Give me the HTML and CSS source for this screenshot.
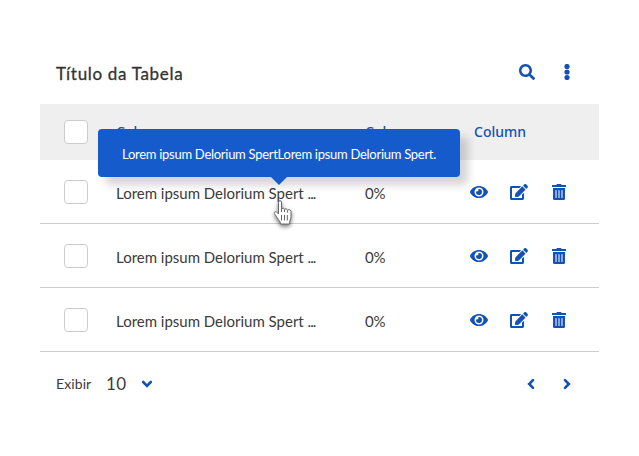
FILE: index.html
```
<!DOCTYPE html>
<html lang="pt-BR">
<head>
<meta charset="utf-8">
<title>Tabela</title>
<link rel="stylesheet" href="styles.css">
</head>
<body>
<svg class="defs" aria-hidden="true">
  <symbol id="eye" viewBox="0 0 576 512"><path d="M572.52 241.4C518.29 135.59 410.93 64 288 64S57.68 135.64 3.48 241.41a32.35 32.35 0 0 0 0 29.19C57.71 376.41 165.07 448 288 448s230.32-71.64 284.52-177.41a32.35 32.35 0 0 0 0-29.19zM288 400a144 144 0 1 1 144-144 143.93 143.93 0 0 1-144 144zm0-240a95.31 95.31 0 0 0-25.31 3.79 47.85 47.85 0 0 1-66.9 66.9A95.78 95.78 0 1 0 288 160z"/></symbol>
  <symbol id="edit" viewBox="0 0 576 512"><path d="M402.6 83.2l90.2 90.2c3.8 3.8 3.8 10 0 13.8L274.4 405.6l-92.8 10.3c-12.4 1.4-22.9-9.1-21.5-21.5l10.3-92.8L388.8 83.2c3.8-3.8 10-3.8 13.8 0zm162-22.9l-48.8-48.8c-15.2-15.2-39.9-15.2-55.2 0l-35.4 35.4c-3.8 3.8-3.8 10 0 13.8l90.2 90.2c3.8 3.8 10 3.8 13.8 0l35.4-35.4c15.2-15.3 15.2-40 0-55.2zM384 346.2V448H64V128h229.8c3.2 0 6.2-1.3 8.5-3.5l40-40c7.6-7.6 2.2-20.5-8.5-20.5H48C21.5 64 0 85.5 0 112v352c0 26.5 21.5 48 48 48h352c26.5 0 48-21.5 48-48V306.2c0-10.7-12.9-16-20.5-8.5l-40 40c-2.2 2.3-3.5 5.3-3.5 8.5z"/></symbol>
  <symbol id="trash" viewBox="0 0 448 512"><path d="M32 464a48 48 0 0 0 48 48h288a48 48 0 0 0 48-48V128H32zm272-256a16 16 0 0 1 32 0v224a16 16 0 0 1-32 0zm-96 0a16 16 0 0 1 32 0v224a16 16 0 0 1-32 0zm-96 0a16 16 0 0 1 32 0v224a16 16 0 0 1-32 0zM432 32H312l-9.400-18.700A24 24 0 0 0 281.100 0H166.800a23.720 23.720 0 0 0-21.400 13.300L136 32H16A16 16 0 0 0 0 48v32a16 16 0 0 0 16 16h416a16 16 0 0 0 16-16V48a16 16 0 0 0-16-16z"/></symbol>
  <symbol id="search" viewBox="0 0 512 512"><path d="M505 442.7L405.3 343c-4.5-4.5-10.6-7-17-7H372c27.6-35.3 44-79.7 44-128C416 93.1 322.9 0 208 0S0 93.1 0 208s93.1 208 208 208c48.3 0 92.7-16.4 128-44v16.3c0 6.4 2.5 12.5 7 17l99.7 99.7c9.4 9.4 24.6 9.4 33.9 0l28.3-28.3c9.4-9.4 9.4-24.6.1-34zM208 336c-70.7 0-128-57.2-128-128 0-70.7 57.2-128 128-128 70.7 0 128 57.2 128 128 0 70.7-57.2 128-128 128z"/></symbol>
  <symbol id="dots" viewBox="0 0 16 16"><circle cx="8" cy="2.5" r="2.6"/><circle cx="8" cy="8" r="2.6"/><circle cx="8" cy="13.5" r="2.6"/></symbol>
  <symbol id="chevron" viewBox="0 0 16 16"><path d="M4.2 6 8 9.8 11.8 6" fill="none" stroke="currentColor" stroke-width="2.6" stroke-linecap="round"/></symbol>
</svg>
<main class="card">
  <header class="bar">
    <h1 class="title">Título da Tabela</h1>
    <div class="tools">
      <svg class="icon"><use href="#search"/></svg>
      <svg class="icon"><use href="#dots"/></svg>
    </div>
  </header>
  <section class="table">
    <div class="row head">
      <span class="check"></span><span>Column</span><span>Column</span><span class="last">Column</span>
    </div>
    <div class="row">
      <span class="check"></span><span class="text">Lorem ipsum Delorium Spert <span class="dots">...</span></span><span class="num">0%</span>
      <div class="actions"><svg class="icon wide"><use href="#eye"/></svg><svg class="icon wide"><use href="#edit"/></svg><svg class="icon wide"><use href="#trash"/></svg></div>
    </div>
    <div class="row">
      <span class="check"></span><span class="text">Lorem ipsum Delorium Spert <span class="dots">...</span></span><span class="num">0%</span>
      <div class="actions"><svg class="icon wide"><use href="#eye"/></svg><svg class="icon wide"><use href="#edit"/></svg><svg class="icon wide"><use href="#trash"/></svg></div>
    </div>
    <div class="row">
      <span class="check"></span><span class="text">Lorem ipsum Delorium Spert <span class="dots">...</span></span><span class="num">0%</span>
      <div class="actions"><svg class="icon wide"><use href="#eye"/></svg><svg class="icon wide"><use href="#edit"/></svg><svg class="icon wide"><use href="#trash"/></svg></div>
    </div>
    <div class="tooltip"><span class="tip-text">Lorem ipsum Delorium SpertLorem ipsum Delorium Spert.</span></div>
    <svg class="cursor" viewBox="0 0 20 26"><path d="M5.500 2.200c0-2 3-2 3 0v7c.3-1.500 3-1.400 3 .6.300-1.400 3-1.200 3 .7.400-1.200 3.500-1 3.500 1v5c0 3-1.500 4-1.500 7.500H7.500c0-2.500-2-4-3.500-6.500-1-2-3-3.700-2.700-4.800.5-1.700 2.700-1 4.200 1.300z"/><path d="M8.500 15v5.500M11.500 15v5.500M14.300 15v5.500M8.500 9v3M11.500 10v2M14.500 11v1.500"/></svg>
  </section>
  <footer class="footer">
    <span class="show">Exibir</span><span class="size">10</span>
    <svg class="icon"><use href="#chevron"/></svg>
    <div class="pager">
      <svg class="icon prev"><use href="#chevron"/></svg>
      <svg class="icon next"><use href="#chevron"/></svg>
    </div>
  </footer>
</main>
</body>
</html>
```
FILE: styles.css
```
* { box-sizing: border-box; }
body { margin: 0; background: #fff; color: #3b3b3b; font: 15px/20px Lato, "Noto Sans", sans-serif; }
.defs { position: absolute; width: 0; height: 0; }
.card { width: 559px; margin: 40px 0 0 40px; }
.icon { display: block; width: 16px; height: 16px; flex: none; color: #1351b4; fill: #1351b4; }
.icon.wide { width: 18px; }
.bar { height: 64px; display: flex; align-items: center; justify-content: space-between; padding: 4px 24px 0 16px; }
.title { margin: 0; font: 400 17px/24px Lato, sans-serif; letter-spacing: .68px; color: #333; -webkit-text-stroke: .3px #333; }
.tools { display: flex; gap: 24px; margin-bottom: 4px; }
.table { position: relative; }
.row { display: grid; grid-template-columns: 76px 249px 105px 1fr; align-items: center; height: 64px; border-bottom: 1px solid #ccc; }
.head { height: 56px; background: #efefef; border: 0; color: #1351b4; font: 500 14px/20px "Noto Sans", sans-serif; }
.last { padding-left: 4px; }
.check { width: 24px; height: 24px; margin-left: 24px; border: 1px solid #ccc; border-radius: 4px; background: #fff; }
.text { letter-spacing: -.01px; padding-top: 2px; white-space: nowrap; }
.dots { letter-spacing: -.9px; }
.num { padding-top: 2px; letter-spacing: -.3px; }
.actions { display: flex; gap: 22px; }
.tooltip { position: absolute; left: 58px; top: 25px; width: 362px; height: 48px; display: flex; align-items: center; padding: 1px 24px 0; border-radius: 4px; background: #155bcb; color: #fff; font-size: 13px; letter-spacing: -.28px; white-space: nowrap; box-shadow: 8px 8px 8px rgba(0,0,0,.17); }
.tooltip::after { content: ""; position: absolute; left: 173px; top: 48px; border: 8px solid transparent; border-top-color: #155bcb; border-bottom: 0; }
.cursor { position: absolute; left: 233px; top: 96px; width: 20px; height: 26px; overflow: visible; fill: #fff; stroke: #666; stroke-width: 1; filter: drop-shadow(0 2px 2px rgba(0,0,0,.55)); }
.footer { display: flex; align-items: center; height: 64px; padding: 0 24px 0 16px; }
.show { width: 50px; font-size: 14px; letter-spacing: .1px; }
.size { width: 33px; font-size: 17px; letter-spacing: .3px; }
.pager { display: flex; gap: 20px; margin-left: auto; }
.prev { transform: rotate(90deg); }
.next { transform: rotate(-90deg); }
```
